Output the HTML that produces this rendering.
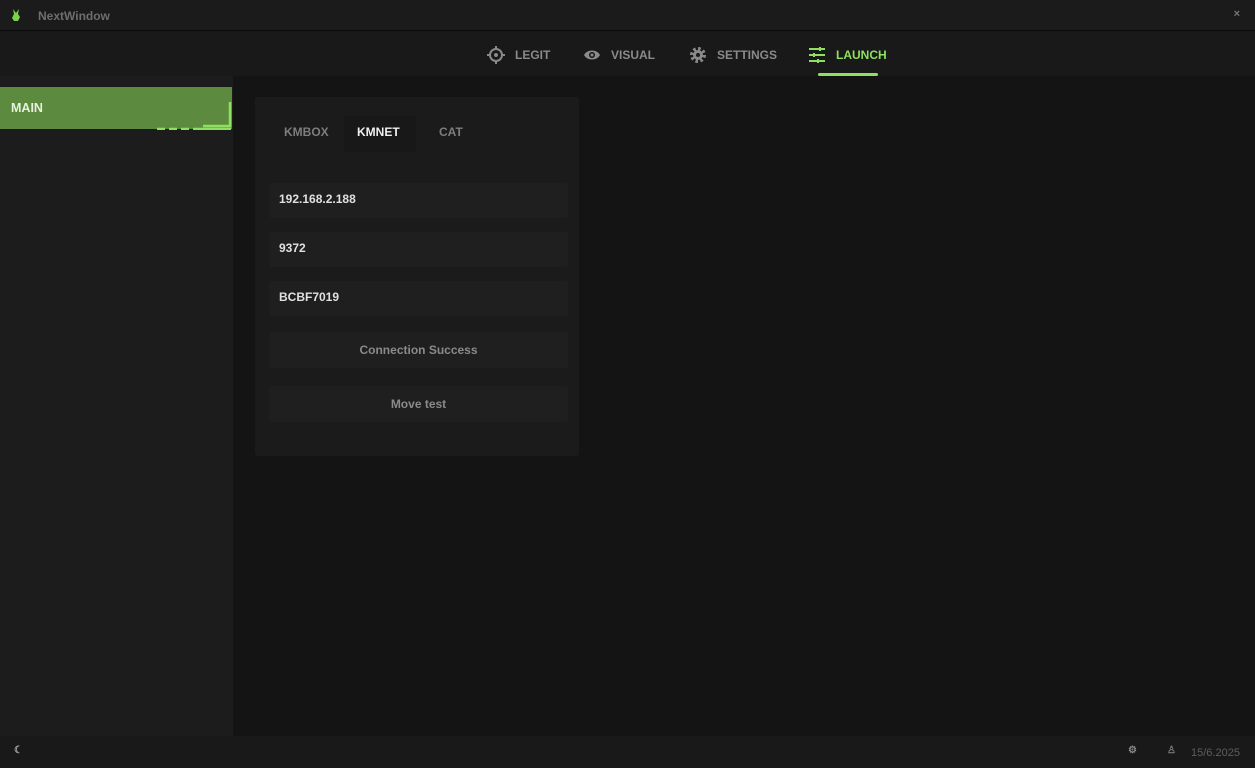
<!DOCTYPE html>
<html><head><style>
*{margin:0;padding:0;box-sizing:border-box}
body{width:1255px;height:768px;background:#161616;font-family:"Liberation Sans",sans-serif;font-weight:bold;position:relative;overflow:hidden;color:#ddd}
.top{position:absolute;left:0;top:0;width:1255px;height:31px;background:#1b1b1b;border-bottom:1px solid #0a0a0a}
.title{position:absolute;left:38px;top:9px;font-size:12px;color:#6e6e6e}
.close{position:absolute;right:15px;top:8px;font-size:11px;color:#777}
.nav{position:absolute;top:32px;left:0;width:1255px;height:44px;background:#191919}
.ni{position:absolute;top:14px;font-size:12px;color:#8a8a8a;display:flex;align-items:center;gap:10px}
.ni svg{width:18px;height:18px}
.side{position:absolute;left:0;top:76px;width:233px;height:660px;background:#1c1c1c}
.main{position:absolute;left:233px;top:76px;width:1022px;height:660px;background:#141414}
.mainbtn{position:absolute;left:0;top:87px;width:232px;height:42px;background:#5c8a3e;font-size:12.5px;color:#e8f0e0;padding:14px 11px}
.card{position:absolute;left:255px;top:97px;width:324px;height:359px;background:#1b1b1b;border-radius:3px}
.tab{position:absolute;top:125px;font-size:12px;color:#7d7d7d}
.inp{position:absolute;left:269px;width:299px;height:35px;background:#1f1f1f;border-radius:3px;font-size:12px;color:#e0e0e0;padding:9px 10px}
.btn{text-align:center;color:#8a8a8a;padding:11px 10px 0 10px}
.bot{position:absolute;left:0;top:736px;width:1255px;height:32px;background:#191919}
</style></head><body>
<div class="top">
<svg style="position:absolute;left:10px;top:8px" width="13" height="14" viewBox="0 0 13 14"><path d="M3 1l3 4 3-4-1 5 2 3-2 4H4L2 10l2-4z" fill="#7bd14a"/></svg>
<div class="title">NextWindow</div><div class="close">×</div></div>
<div class="nav">
<div class="ni" style="left:487px"><svg viewBox="0 0 18 18"><circle cx="9" cy="9" r="6" fill="none" stroke="#8a8a8a" stroke-width="2"/><circle cx="9" cy="9" r="2" fill="#8a8a8a"/><path d="M9 0v3M9 15v3M0 9h3M15 9h3" stroke="#8a8a8a" stroke-width="2"/></svg>LEGIT</div>
<div class="ni" style="left:583px"><svg viewBox="0 0 18 18"><path d="M1 9c3-6 13-6 16 0-3 6-13 6-16 0z" fill="#8a8a8a"/><circle cx="9" cy="9" r="3" fill="#191919"/><circle cx="9" cy="9" r="1.5" fill="#8a8a8a"/></svg>VISUAL</div>
<div class="ni" style="left:689px"><svg viewBox="0 0 18 18"><circle cx="9" cy="9" r="6" fill="none" stroke="#8a8a8a" stroke-width="4" stroke-dasharray="2.4 2.3"/><circle cx="9" cy="9" r="5" fill="#8a8a8a"/><circle cx="9" cy="9" r="2" fill="#191919"/></svg>SETTINGS</div>
<div class="ni" style="left:808px;color:#8fe060"><svg viewBox="0 0 18 18" stroke="#8fe060" stroke-width="2"><path d="M1 3h16M1 9h16M1 15h16"/><path d="M12 1v4M6 7v4M10 13v4"/></svg>LAUNCH</div>
<div style="position:absolute;left:818px;top:41px;width:60px;height:3px;background:#8fe060;border-radius:2px"></div>
</div>
<div class="side"></div><div class="main"></div>
<div class="mainbtn">MAIN</div>
<svg style="position:absolute;left:155px;top:102px" width="78" height="28"><path d="M75 0v24H48" stroke="#8fe060" stroke-width="2.5" fill="none"/><path d="M2 27h8M14 27h8M26 27h8M38 27h38" stroke="#8fe060" stroke-width="2.5"/></svg>
<div class="card"></div>
<div style="position:absolute;left:344px;top:116px;width:72px;height:36px;background:#181818;border-radius:3px"></div>
<div class="tab" style="left:284px">KMBOX</div>
<div class="tab" style="left:357px;color:#f0f0f0">KMNET</div>
<div class="tab" style="left:439px">CAT</div>
<div class="inp" style="top:183px">192.168.2.188</div>
<div class="inp" style="top:232px">9372</div>
<div class="inp" style="top:281px">BCBF7019</div>
<div class="inp btn" style="top:332px;height:36px">Connection Success</div>
<div class="inp btn" style="top:386px;height:36px">Move test</div>
<div class="bot">
<div style="position:absolute;left:14px;top:9px;font-size:10px;color:#aaa">☾</div>
<div style="position:absolute;left:1128px;top:9px;font-size:10px;color:#888">⚙</div>
<div style="position:absolute;left:1167px;top:9px;font-size:10px;color:#777">♙</div>
<div style="position:absolute;left:1191px;top:11px;font-size:11px;color:#5e5e5e;font-weight:normal">15/6.2025</div>
</div>
</body></html>
